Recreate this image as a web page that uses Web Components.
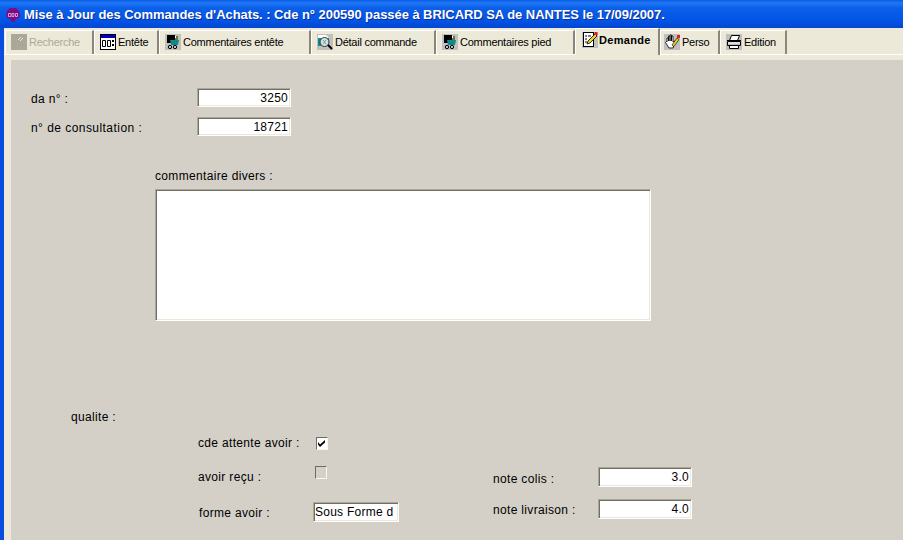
<!DOCTYPE html>
<html lang="fr">
<head>
<meta charset="utf-8">
<title>Mise à Jour des Commandes d'Achats</title>
<style>
  html, body { margin: 0; padding: 0; height: 100%; overflow: hidden; background: #d4d0c8; }
</style>
</head>
<body>
<app-window>
  <title-bar slot="title">Mise à Jour des Commandes d'Achats. : Cde n° 200590 passée à BRICARD SA de NANTES le 17/09/2007.</title-bar>
  <tab-strip slot="tabs">
    <tab-item icon="search" width="89" disabled>Recherche</tab-item>
    <tab-item icon="header" width="65">Entête</tab-item>
    <tab-item icon="comment" width="152">Commentaires entête</tab-item>
    <tab-item icon="detail" width="125">Détail commande</tab-item>
    <tab-item icon="comment" width="139">Commentaires pied</tab-item>
    <tab-item icon="note" width="85" selected>Demande</tab-item>
    <tab-item icon="hand" width="60" pad="3">Perso</tab-item>
    <tab-item icon="print" width="67">Edition</tab-item>
  </tab-strip>
  <demande-form></demande-form>
</app-window>

<script>
const ICONS = {
  search: `<rect width="16" height="16" fill="#aca899"/><path d="M7 6l3-3M9 7l3-3" stroke="#ece9d8" fill="none"/>`,
  header: `<rect x=".5" y=".5" width="15" height="15" fill="#fff" stroke="#000"/><rect x="1" y="1" width="14" height="3" fill="#0000c8"/>
    <path d="M2.5 6.5h3v6h-3zM7.5 6.5h3v6h-3z" fill="none" stroke="#000"/><path d="M12 6h2v2h-2zM12 10h2v2h-2z" fill="#000"/>`,
  comment: `<rect width="16" height="16" fill="#c0c0c0"/><rect x="2" y="1" width="8" height="8" fill="#000"/>
    <path d="M5 6h9l-1 5H6z" fill="#0f8a8a"/><path d="M10 2h3v4h-3z" fill="#6b7a2a"/><path d="M10 2h1v2h-1z" fill="#fff"/>
    <circle cx="5" cy="13" r="1.7" fill="none" stroke="#000"/><circle cx="10" cy="13" r="1.7" fill="none" stroke="#000"/>`,
  detail: `<rect width="16" height="16" fill="#c0c0c0"/><path d="M1 1h8l3 3H1z" fill="#fff"/><rect x="1" y="4" width="11" height="8" fill="#0f8a8a"/>
    <circle cx="7.5" cy="8" r="4.5" fill="#cfe3e3" stroke="#333"/><path d="M6 6l3 4M9 6l-3 4" stroke="#7a9a9a"/><path d="M11 11l4 4" stroke="#000" stroke-width="2"/>`,
  note: `<rect width="16" height="16" fill="#c0c0c0"/><rect x="1.500" y=".5" width="10" height="14" fill="#fff" stroke="#000"/>
    <path d="M3 4h2M3 7h2M3 10h2M6 4h3" stroke="#000"/><path d="M5 12l1-3 7-7 2 2-7 7z" fill="#f0d020" stroke="#000" stroke-width=".8"/><rect x="12.500" y="0" width="3" height="3" fill="#e02020"/>`,
  hand: `<rect width="16" height="16" fill="#c0c0c0"/><path d="M3 8V4h1.500v3-5H6v5V1h1.500v6-5H9v6l1.500-1 .5 1-2 6H5L1.500 8.500 2.500 7.500z" fill="#fff" stroke="#000" stroke-width=".8"/>
    <path d="M8 11l5-7 2 1.500-5 7z" fill="#f0d020" stroke="#000" stroke-width=".6"/><rect x="13" y="1" width="3" height="3" fill="#e02020"/>`,
  print: `<rect width="16" height="16" fill="#c0c0c0"/><path d="M5.500 1.500h8l-2 5h-8z" fill="#fff" stroke="#000"/><path d="M1.500 7.500h13v4h-13z" fill="#bbb" stroke="#000"/>
    <path d="M2 9h12" stroke="#fff"/><path d="M3.500 11.500h9v3h-9z" fill="#fff" stroke="#000"/><path d="M1 6.500h14" stroke="#000"/>`
};

class AppWindow extends HTMLElement {
  constructor() {
    super();
    this.attachShadow({ mode: "open" });
    this.shadowRoot.innerHTML = `
      <style>
        :host {
          display: flex;
          flex-direction: column;
          width: 903px;
          height: 540px;
          overflow: hidden;
          background: #ece9d8;
          font-family: "Liberation Sans", Arial, sans-serif;
        }
        .body {
          flex: 1;
          display: flex;
          flex-direction: column;
          border-left: 4px solid #0a4ee0;
          min-height: 0;
        }
        .page {
          flex: 1;
          margin: 5px 0 0 7px;
          background: #d4d0c8;
          min-height: 0;
        }
      </style>
      <slot name="title"></slot>
      <div class="body">
        <slot name="tabs"></slot>
        <div class="page"><slot></slot></div>
      </div>
    `;
  }
}

class TitleBar extends HTMLElement {
  constructor() {
    super();
    this.attachShadow({ mode: "open" });
    this.shadowRoot.innerHTML = `
      <style>
        :host {
          display: flex;
          align-items: center;
          gap: 4px;
          height: 28px;
          box-sizing: border-box;
          padding: 1px 0 0 6px;
          background: linear-gradient(#0a5be6 0, #1f77f5 3px, #0b5fe8 8px, #0355e6 20px, #0446d2 28px);
          color: #fff;
          font: bold 13px "Liberation Sans", Arial, sans-serif;
          letter-spacing: -.06px;
          white-space: nowrap;
          text-shadow: 1px 1px 0 #0a2f9a;
        }
        svg { flex: none; }
      </style>
      <svg width="14" height="14" viewBox="0 0 14 14">
        <path d="M0 7l1-4 3-3h6l3 3 1 4-1 3-3 1-2 3h-2l-2-3-3-1z" fill="#7a0c86"/>
        <path d="M2.500 5.500h2.500v3H2.500zM6 5.500h2v3H6zM9.500 5.500h2v3h-2z" fill="none" stroke="#e9b8e8" stroke-width=".8"/>
      </svg>
      <span><slot></slot></span>
    `;
  }
}

class TabStrip extends HTMLElement {
  constructor() {
    super();
    this.attachShadow({ mode: "open" });
    this.shadowRoot.innerHTML = `
      <style>
        :host {
          display: flex;
          align-items: flex-end;
          height: 27px;
          box-sizing: border-box;
          padding-left: 1px;
          border-bottom: 1px solid #fff;
        }
      </style>
      <slot></slot>
    `;
  }
}

class TabItem extends HTMLElement {
  constructor() {
    super();
    this.attachShadow({ mode: "open" });
    const on = this.hasAttribute("selected");
    const off = this.hasAttribute("disabled");
    const icon = this.getAttribute("icon");
    const pad = this.getAttribute("pad") || 5;
    this.shadowRoot.innerHTML = `
      <style>
        :host {
          display: flex;
          align-items: center;
          gap: ${on ? 1 : 2}px;
          box-sizing: border-box;
          width: ${this.getAttribute("width")}px;
          height: ${on ? 27 : 24}px;
          margin-bottom: ${on ? -1 : 0}px;
          padding: ${on ? "0 0 5px 6px" : `0 0 2px ${pad}px`};
          background: #ece9d8;
          border-top: 1px solid #fff;
          border-left: 1px solid #fff;
          border-right: 2px solid #8a8778;
          color: ${off ? "#aca899" : "#000"};
          font: ${on ? "bold" : "normal"} 11px "Liberation Sans", Arial, sans-serif;
          letter-spacing: ${on ? ".3px" : "-.25px"};
          white-space: nowrap;
        }
        svg { flex: none; }
      </style>
      <svg width="16" height="16" viewBox="0 0 16 16">${ICONS[icon]}</svg>
      <span><slot></slot></span>
    `;
  }
}

class FormLabel extends HTMLElement {
  constructor() {
    super();
    this.attachShadow({ mode: "open" });
    this.shadowRoot.innerHTML = `
      <style>
        :host {
          display: block;
          color: #000;
          font: 12px "Liberation Sans", Arial, sans-serif;
          letter-spacing: .33px;
          white-space: nowrap;
        }
      </style>
      <slot></slot>
    `;
  }
}

class SunkenBox extends HTMLElement {
  constructor() {
    super();
    this.attachShadow({ mode: "open" });
    const w = this.getAttribute("width");
    const h = this.getAttribute("height");
    this.shadowRoot.innerHTML = `
      <style>
        :host {
          display: block;
          flex: none;
          box-sizing: border-box;
          width: ${w}px;
          height: ${h}px;
          overflow: hidden;
          padding: 1px 2px 0 1px;
          background: #fff;
          border: 1px solid;
          border-color: #aca899 #fff #fff #aca899;
          box-shadow: inset 1px 1px 0 #716f64, inset -1px -1px 0 #ece9d8;
          color: #000;
          font: 12px/${h - 3}px "Liberation Sans", Arial, sans-serif;
          letter-spacing: .25px;
          text-align: ${this.hasAttribute("left") ? "left" : "right"};
          white-space: nowrap;
        }
      </style>
      <slot></slot>
    `;
  }
}

class CheckBox extends HTMLElement {
  constructor() {
    super();
    this.attachShadow({ mode: "open" });
    this.shadowRoot.innerHTML = `
      <style>
        :host {
          display: block;
          flex: none;
          box-sizing: border-box;
          width: 12px;
          height: 13px;
          background: ${this.hasAttribute("light") ? "#d4d0c8" : "#fff"};
          border-style: solid;
          border-width: 1px;
          border-color: #6e6b60 #f7f6f0 #f7f6f0 #6e6b60;
        }
        svg { display: block; }
      </style>
      ${this.hasAttribute("checked") ? `<svg width="10" height="11" viewBox="0 0 10 11"><path d="M1 4l2 2.500L8 2v2.500L3 9 1 6.500z" fill="#000"/></svg>` : ""}
    `;
  }
}

class DemandeForm extends HTMLElement {
  constructor() {
    super();
    this.attachShadow({ mode: "open" });
    this.shadowRoot.innerHTML = `
      <style>
        :host {
          display: flex;
          flex-direction: column;
          padding: 28px 0 0 20px;
        }
        .row { display: flex; align-items: center; }
        .row form-label { width: 166px; padding-top: 2px; }
        .second { margin-top: 10px; }
        .comment { margin: 33px 0 0 124px; }
        .comment sunken-box { margin-top: 6px; }
        .quality { margin: 89px 0 0 40px; }
        .bottom { display: flex; margin: 12px 0 0 167px; }
        .left { width: 295px; }
        .line { display: flex; align-items: flex-start; }
        .l1 form-label { width: 118px; }
        .l1 check-box { margin-top: 1px; }
        .l2 { margin-top: 16px; }
        .l2 form-label { width: 117px; margin-top: 4px; }
        .l3 { margin-top: 18px; }
        .l3 form-label { width: 114px; margin: 4px 0 0 1px; }
        .right { padding-top: 31px; }
        .right form-label { width: 105px; margin-top: 5px; }
        .r2 { margin-top: 12px; }
        .r2 form-label { margin-top: 4px; }
      </style>
      <div class="row"><form-label>da n° :</form-label><sunken-box width="94" height="19">3250</sunken-box></div>
      <div class="row second"><form-label style="letter-spacing:.45px">n° de consultation :</form-label><sunken-box width="94" height="19">18721</sunken-box></div>
      <div class="comment">
        <form-label>commentaire divers :</form-label>
        <sunken-box width="496" height="132" left></sunken-box>
      </div>
      <form-label class="quality">qualite :</form-label>
      <div class="bottom">
        <div class="left">
          <div class="line l1"><form-label>cde attente avoir :</form-label><check-box checked></check-box></div>
          <div class="line l2"><form-label>avoir reçu :</form-label><check-box light></check-box></div>
          <div class="line l3"><form-label>forme avoir :</form-label><sunken-box width="86" height="20" left>Sous Forme d</sunken-box></div>
        </div>
        <div class="right">
          <div class="line"><form-label>note colis :</form-label><sunken-box width="94" height="20">3.0</sunken-box></div>
          <div class="line r2"><form-label>note livraison :</form-label><sunken-box width="94" height="20">4.0</sunken-box></div>
        </div>
      </div>
    `;
  }
}

customElements.define("app-window", AppWindow);
customElements.define("title-bar", TitleBar);
customElements.define("tab-strip", TabStrip);
customElements.define("tab-item", TabItem);
customElements.define("form-label", FormLabel);
customElements.define("sunken-box", SunkenBox);
customElements.define("check-box", CheckBox);
customElements.define("demande-form", DemandeForm);
</script>
</body>
</html>
